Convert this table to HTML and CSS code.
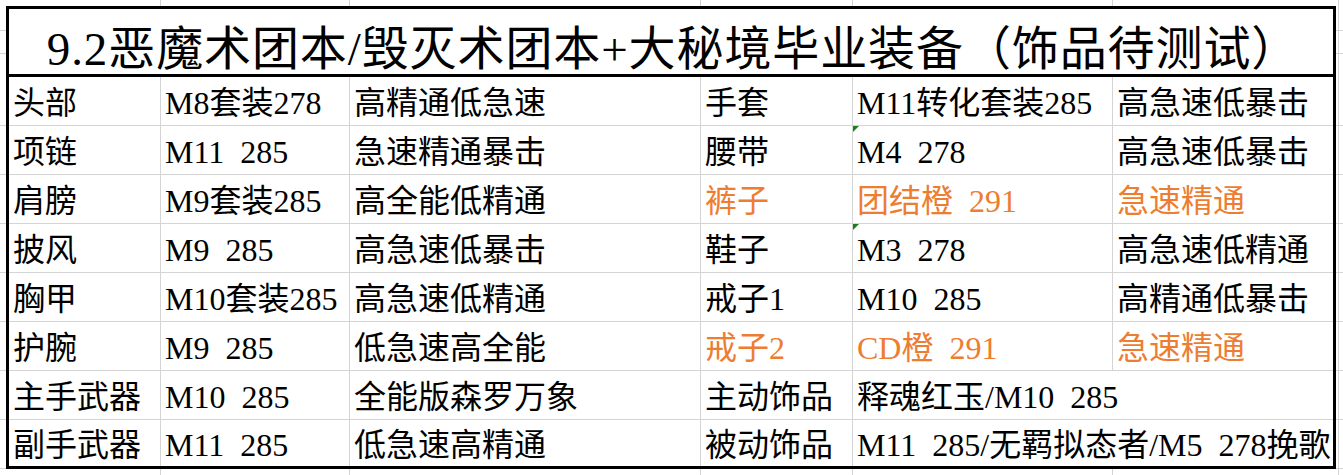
FILE: index.html
```html
<!DOCTYPE html>
<html lang="zh-CN">
<head>
<meta charset="utf-8">
<title>9.2恶魔术团本/毁灭术团本+大秘境毕业装备</title>
<link rel="stylesheet" href="styles.css">
</head>
<body>
<div class="sheet">
  <div class="title">9.2恶魔术团本/毁灭术团本+大秘境毕业装备（饰品待测试）</div>

  <div class="cell">头部</div><div class="cell">M8套装278</div><div class="cell">高精通低急速</div>
  <div class="cell">手套</div><div class="cell">M11转化套装285</div><div class="cell last">高急速低暴击</div>

  <div class="cell">项链</div><div class="cell">M11 285</div><div class="cell">急速精通暴击</div>
  <div class="cell">腰带</div><div class="cell flagged">M4 278</div><div class="cell last">高急速低暴击</div>

  <div class="cell">肩膀</div><div class="cell">M9套装285</div><div class="cell">高全能低精通</div>
  <div class="cell orange">裤子</div><div class="cell orange">团结橙 291</div><div class="cell last orange">急速精通</div>

  <div class="cell">披风</div><div class="cell">M9 285</div><div class="cell">高急速低暴击</div>
  <div class="cell">鞋子</div><div class="cell flagged">M3 278</div><div class="cell last">高急速低精通</div>

  <div class="cell">胸甲</div><div class="cell">M10套装285</div><div class="cell">高急速低精通</div>
  <div class="cell">戒子1</div><div class="cell">M10 285</div><div class="cell last">高精通低暴击</div>

  <div class="cell">护腕</div><div class="cell">M9 285</div><div class="cell">低急速高全能</div>
  <div class="cell orange">戒子2</div><div class="cell orange">CD橙 291</div><div class="cell last orange">急速精通</div>

  <div class="cell">主手武器</div><div class="cell">M10 285</div><div class="cell">全能版森罗万象</div>
  <div class="cell">主动饰品</div><div class="cell wide last">释魂红玉/M10 285</div>

  <div class="cell bottom">副手武器</div><div class="cell bottom">M11 285</div><div class="cell bottom">低急速高精通</div>
  <div class="cell bottom">被动饰品</div><div class="cell wide last bottom">M11 285/无羁拟态者/M5 278挽歌</div>
</div>
</body>
</html>
```

FILE: styles.css
```css
html, body {
  margin: 0;
  padding: 0;
}

body {
  width: 1343px;
  height: 475px;
  overflow: hidden;
  background-color: #fff;
  background-image:
    linear-gradient(#d4d4d4, #d4d4d4),
    linear-gradient(#d4d4d4, #d4d4d4),
    linear-gradient(#d4d4d4, #d4d4d4),
    linear-gradient(#d4d4d4, #d4d4d4),
    linear-gradient(#d4d4d4, #d4d4d4),
    linear-gradient(#d4d4d4, #d4d4d4),
    repeating-linear-gradient(to bottom, transparent 0, transparent 48px, #d4d4d4 48px, #d4d4d4 49px),
    linear-gradient(#d4d4d4, #d4d4d4),
    linear-gradient(#d4d4d4, #d4d4d4);
  background-size:
    1px 100%, 1px 100%, 1px 100%, 1px 100%, 1px 100%, 1px 100%,
    100% 420px, 100% 1px, 100% 1px;
  background-position:
    160px 0, 349px 0, 700px 0, 852px 0, 1112px 0, 1338px 0,
    0 77px, 0 30px, 0 53px;
  background-repeat: no-repeat;
  font-family: "Liberation Serif", "Noto Sans CJK SC", serif;
  color: #000;
}

.sheet {
  margin: 6px 0 0 6px;
  width: 1330px;
  box-sizing: border-box;
  border: 3px solid #000;
  background: #fff;
  display: grid;
  grid-template-columns: 152px 189px 351px 152px 260px 220px;
  grid-template-rows: 68px repeat(7, 49px) 46px;
}

.title {
  grid-column: 1 / -1;
  border-bottom: 3px solid #000;
  display: flex;
  align-items: center;
  justify-content: center;
  padding: 6px 0 0 4px;
  box-sizing: border-box;
  font-size: 47px;
  letter-spacing: 0.9px;
  word-spacing: 0.25em;
  white-space: nowrap;
}

.cell {
  position: relative;
  box-sizing: border-box;
  border-right: 1px solid #d4d4d4;
  border-bottom: 1px solid #d4d4d4;
  display: flex;
  align-items: center;
  padding: 3px 0 0 4px;
  font-size: 32px;
  line-height: 44px;
  word-spacing: 0.25em;
  white-space: nowrap;
}

.cell.last {
  border-right: none;
}

.cell.bottom {
  border-bottom: none;
}

.cell.wide {
  grid-column: span 2;
}

.orange {
  color: #ed7d31;
}

.flagged::before {
  content: "";
  position: absolute;
  left: 0;
  top: 0;
  width: 0;
  height: 0;
  border-top: 6px solid #1e7b1e;
  border-right: 6px solid transparent;
}
```
